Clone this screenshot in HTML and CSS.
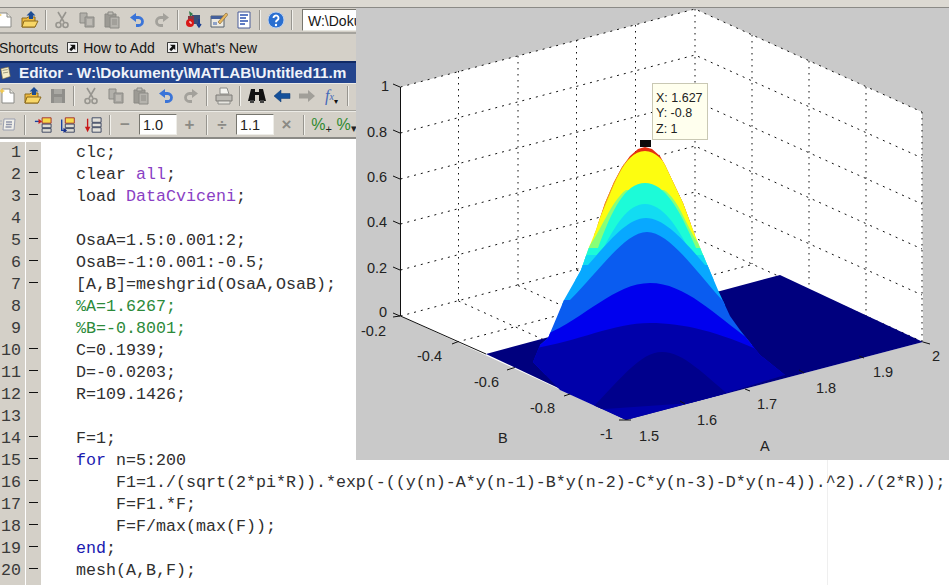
FILE: index.html
```html
<!DOCTYPE html>
<html lang="en">
<head>
<meta charset="utf-8">
<title>MATLAB Editor and Figure</title>
<link rel="stylesheet" href="styles.css">
</head>
<body>
<svg class="defs" width="0" height="0" aria-hidden="true">
  <defs>
    <symbol id="i-new" viewBox="0 0 18 18"><path d="M3 2h8l4 4v10H3z" fill="#fff" stroke="#8a8a86"/><path d="M11 2v4h4" fill="#ecebe4" stroke="#8a8a86"/><path d="M3 1l1 2 2 1-2 1-1 2-1-2-2-1 2-1z" fill="#f0c850"/></symbol>
    <symbol id="i-open" viewBox="0 0 18 18"><path d="M1 7h5l1-1h7v10H1z" fill="#eeb93e" stroke="#8c6a1c"/><path d="M1 16l2-6h14l-3 6z" fill="#f8d768" stroke="#8c6a1c"/><path d="M8 8V4.500H5.500L10 0l4.500 4.500H12V8z" fill="#1c4c94"/></symbol>
    <symbol id="i-save" viewBox="0 0 18 18"><path d="M2 2h14v14H2z" fill="#8f8e8a"/><path d="M5 2h8v5H5z" fill="#a9a8a3"/><path d="M5 10h8v6H5z" fill="#a2a19c"/></symbol>
    <symbol id="i-cut" viewBox="0 0 18 18"><g fill="none" stroke="#97958f" stroke-width="1.600"><path d="M5 1l6 10M13 1L7 11"/><circle cx="5.500" cy="14" r="2.500"/><circle cx="12.500" cy="14" r="2.500"/></g></symbol>
    <symbol id="i-copy" viewBox="0 0 18 18"><path d="M2 2h7v10H2z" fill="#b2b0aa" stroke="#8b8a85"/><path d="M7 6h9v10H7z" fill="#a7a5a0" stroke="#8b8a85"/><path d="M9 9h5M9 11h5M9 13h5" stroke="#d4d0c8"/></symbol>
    <symbol id="i-paste" viewBox="0 0 18 18"><path d="M2 3h11v13H2z" fill="#9c9a94" stroke="#8b8a85"/><path d="M5 1h5v3H5z" fill="#c1bfb8" stroke="#8b8a85"/><path d="M7 6h9v11H7z" fill="#b5b3ad" stroke="#8b8a85"/><path d="M9 9h5M9 11h5M9 13h5" stroke="#8f8d88"/></symbol>
    <symbol id="i-undo" viewBox="0 0 18 18"><path d="M2 6.500L8 2v9z" fill="#3a74d8"/><path d="M7 6.500h3.500a4 4 0 0 1 0 8H8" fill="none" stroke="#3a74d8" stroke-width="2.800"/></symbol>
    <symbol id="i-redo" viewBox="0 0 18 18"><path d="M16 6.500L10 2v9z" fill="#a3a19b"/><path d="M11 6.500H7.500a4 4 0 0 0 0 8H10" fill="none" stroke="#a3a19b" stroke-width="2.800"/></symbol>
    <symbol id="i-sim" viewBox="0 0 18 18"><path d="M4 0l4 3-3 3z" fill="#2f7a4a"/><path d="M7 4h8v9H7z" fill="#394e78"/><path d="M3 5h6v5H3z" fill="#8a3440"/><circle cx="5" cy="12" r="4" fill="#d81818"/><path d="M5 10v2h2" stroke="#fff" fill="none"/><path d="M14 8v7M12 13l2 3 2-3" stroke="#1c3f90" fill="none" stroke-width="1.500"/></symbol>
    <symbol id="i-guide" viewBox="0 0 18 18"><path d="M1 5h13v11H1z" fill="#eceae2" stroke="#55606f"/><path d="M1 5h13v3H1z" fill="#44609c"/><path d="M3 11h4v3H3z" fill="#8ea2c8"/><path d="M8 11l8-9 2 1.500L10 13z" fill="#e8b860" stroke="#7a6030" stroke-width=".6"/></symbol>
    <symbol id="i-prof" viewBox="0 0 18 18"><path d="M3 1h12v16H3z" fill="#fff" stroke="#4a5c98"/><path d="M5 4h8M5 7h6M5 10h8M5 13h5" stroke="#2c52b0" stroke-width="1.400"/></symbol>
    <symbol id="i-help" viewBox="0 0 18 18"><circle cx="9" cy="9" r="8" fill="#2a6fd0" stroke="#bcd0ee"/><path d="M6.500 7a2.500 2.500 0 1 1 3.800 2.100c-1 .6-1.300 1-1.300 2.100" fill="none" stroke="#fff" stroke-width="1.900"/><circle cx="9" cy="14" r="1.200" fill="#fff"/></symbol>
    <symbol id="i-print" viewBox="0 0 18 18"><path d="M5 1h7l2 6H5z" fill="#f4f4f0" stroke="#8c8c88"/><path d="M1 8h16v6H1z" fill="#bdbbb5" stroke="#7c7b76"/><path d="M3 14h12v3H3z" fill="#e6e5df" stroke="#8c8c88"/></symbol>
    <symbol id="i-find" viewBox="0 0 18 18"><path d="M3 2h4v3h4V2h4l3 12h-7V8H7v6H0z" fill="#111"/><path d="M2 13h4v3H2zM12 13h4v3h-4z" fill="#444"/></symbol>
    <symbol id="i-back" viewBox="0 0 18 18"><path d="M1 9l7-6v3.500h9v5H8V15z" fill="#14509a" stroke="#0c3870" stroke-width=".5"/></symbol>
    <symbol id="i-fwd" viewBox="0 0 18 18"><path d="M17 9l-7-6v3.500H1v5h9V15z" fill="#a19f99"/></symbol>
    <symbol id="i-cell1" viewBox="0 0 20 18"><path d="M9 1h10v6H9z" fill="#f6d84a" stroke="#a02828"/><path d="M9 8h10v4H9zM9 13h10v4H9z" fill="#dedcd4" stroke="#34405c"/><path d="M1 5h5" stroke="#1840a0" stroke-width="1.500"/><path d="M9 5L5 2v6z" fill="#c81818"/></symbol>
    <symbol id="i-cell2" viewBox="0 0 20 18"><path d="M7 1h10v6H7z" fill="#f6d84a" stroke="#a02828"/><path d="M7 8h10v4H7zM7 13h10v4H7z" fill="#dedcd4" stroke="#34405c"/><path d="M3 3v12h3" fill="none" stroke="#1840a0" stroke-width="1.500"/><path d="M9 15l-4-3v6z" fill="#18308c"/></symbol>
    <symbol id="i-cell3" viewBox="0 0 20 18"><path d="M9 1h10v5H9zM9 7h10v4H9zM9 12h10v5H9z" fill="#e3e1da" stroke="#34405c"/><path d="M4 2v10" stroke="#c81818" stroke-width="1.500"/><path d="M1 11h6l-3 6z" fill="#c81818"/></symbol>
    <symbol id="i-list" viewBox="0 0 18 18"><path d="M5 3h11l-1 11H4z" fill="#f0efe9" stroke="#9a9fb0"/><path d="M7 6h6M7 8.500h6M6.500 11h6" stroke="#8e95aa" stroke-width="1.300"/><path d="M0 5h3M0 8h3" stroke="#a8adba"/></symbol>
    <symbol id="i-short" viewBox="0 0 12 12"><path d="M.5.500h11v11H.500z" fill="#f4f4f4" stroke="#222"/><path d="M3 3h6v6L7.500 7 4.500 10 2.500 8l3-3z" fill="#111"/></symbol>
    <symbol id="i-doc" viewBox="0 0 14 16"><path d="M1 3l9-2 2 11-9 3z" fill="#f4edc8" stroke="#7c6a3c" stroke-width=".7"/><path d="M3 5l6-1M3.500 8l6-1" stroke="#8d8a70"/></symbol>
  </defs>
</svg>

<main class="desktop">
  <div class="menu-strip"></div>

  <div class="toolbar toolbar-main">
    <span class="btn"><svg class="ico"><use href="#i-new"/></svg></span>
    <span class="btn"><svg class="ico"><use href="#i-open"/></svg></span>
    <span class="sep"></span>
    <span class="btn"><svg class="ico"><use href="#i-cut"/></svg></span>
    <span class="btn"><svg class="ico"><use href="#i-copy"/></svg></span>
    <span class="btn"><svg class="ico"><use href="#i-paste"/></svg></span>
    <span class="btn"><svg class="ico"><use href="#i-undo"/></svg></span>
    <span class="btn"><svg class="ico"><use href="#i-redo"/></svg></span>
    <span class="sep"></span>
    <span class="btn"><svg class="ico"><use href="#i-sim"/></svg></span>
    <span class="btn"><svg class="ico"><use href="#i-guide"/></svg></span>
    <span class="btn"><svg class="ico"><use href="#i-prof"/></svg></span>
    <span class="sep"></span>
    <span class="btn"><svg class="ico"><use href="#i-help"/></svg></span>
    <span class="sep"></span>
    <span class="path-box">W:\Dokumenty\MATLAB</span>
  </div>

  <div class="shortcuts">
    <span class="shortcut-label">Shortcuts</span>
    <svg class="short-ico"><use href="#i-short"/></svg>
    <span class="shortcut-link">How to Add</span>
    <svg class="short-ico"><use href="#i-short"/></svg>
    <span class="shortcut-link">What's New</span>
  </div>

  <div class="titlebar">
    <svg class="title-ico"><use href="#i-doc"/></svg>
    <span>Editor - W:\Dokumenty\MATLAB\Untitled11.m</span>
  </div>

  <div class="toolbar toolbar-editor">
    <span class="btn"><svg class="ico"><use href="#i-new"/></svg></span>
    <span class="btn"><svg class="ico"><use href="#i-open"/></svg></span>
    <span class="btn"><svg class="ico"><use href="#i-save"/></svg></span>
    <span class="sep"></span>
    <span class="btn"><svg class="ico"><use href="#i-cut"/></svg></span>
    <span class="btn"><svg class="ico"><use href="#i-copy"/></svg></span>
    <span class="btn"><svg class="ico"><use href="#i-paste"/></svg></span>
    <span class="btn"><svg class="ico"><use href="#i-undo"/></svg></span>
    <span class="btn"><svg class="ico"><use href="#i-redo"/></svg></span>
    <span class="sep"></span>
    <span class="btn"><svg class="ico"><use href="#i-print"/></svg></span>
    <span class="sep"></span>
    <span class="btn"><svg class="ico"><use href="#i-find"/></svg></span>
    <span class="btn"><svg class="ico"><use href="#i-back"/></svg></span>
    <span class="btn"><svg class="ico"><use href="#i-fwd"/></svg></span>
    <span class="btn fx">f<sub class="fx-sub">x</sub><i class="fx-arrow">▾</i></span>
    <span class="sep"></span>
  </div>

  <div class="toolbar toolbar-cells">
    <span class="btn"><svg class="ico"><use href="#i-list"/></svg></span>
    <span class="sep wide"></span>
    <span class="btn"><svg class="ico"><use href="#i-cell1"/></svg></span>
    <span class="btn"><svg class="ico"><use href="#i-cell2"/></svg></span>
    <span class="btn"><svg class="ico"><use href="#i-cell3"/></svg></span>
    <span class="sep wide"></span>
    <span class="btn small op">−</span>
    <span class="num">1.0</span>
    <span class="btn op">+</span>
    <span class="sep wide"></span>
    <span class="btn small op">÷</span>
    <span class="num">1.1</span>
    <span class="btn op">×</span>
    <span class="sep wide"></span>
    <span class="btn pct">%<i class="pct-sign">+</i></span>
    <span class="btn pct">%<i class="pct-sign">▾</i></span>
  </div>

  <section class="code">
    <div class="line"><span class="no">1</span><span class="mark on"></span><span class="src">clc;</span></div>
    <div class="line"><span class="no">2</span><span class="mark on"></span><span class="src">clear <span class="str">all</span>;</span></div>
    <div class="line"><span class="no">3</span><span class="mark on"></span><span class="src">load <span class="str">DataCviceni</span>;</span></div>
    <div class="line"><span class="no">4</span><span class="mark"></span><span class="src"></span></div>
    <div class="line"><span class="no">5</span><span class="mark on"></span><span class="src">OsaA=1.5:0.001:2;</span></div>
    <div class="line"><span class="no">6</span><span class="mark on"></span><span class="src">OsaB=-1:0.001:-0.5;</span></div>
    <div class="line"><span class="no">7</span><span class="mark on"></span><span class="src">[A,B]=meshgrid(OsaA,OsaB);</span></div>
    <div class="line"><span class="no">8</span><span class="mark"></span><span class="src cmt">%A=1.6267;</span></div>
    <div class="line"><span class="no">9</span><span class="mark"></span><span class="src cmt">%B=-0.8001;</span></div>
    <div class="line"><span class="no">10</span><span class="mark on"></span><span class="src">C=0.1939;</span></div>
    <div class="line"><span class="no">11</span><span class="mark on"></span><span class="src">D=-0.0203;</span></div>
    <div class="line"><span class="no">12</span><span class="mark on"></span><span class="src">R=109.1426;</span></div>
    <div class="line"><span class="no">13</span><span class="mark"></span><span class="src"></span></div>
    <div class="line"><span class="no">14</span><span class="mark on"></span><span class="src">F=1;</span></div>
    <div class="line"><span class="no">15</span><span class="mark on"></span><span class="src"><span class="kw">for</span> n=5:200</span></div>
    <div class="line"><span class="no">16</span><span class="mark on"></span><span class="src">    F1=1./(sqrt(2*pi*R)).*exp(-((y(n)-A*y(n-1)-B*y(n-2)-C*y(n-3)-D*y(n-4)).^2)./(2*R));</span></div>
    <div class="line"><span class="no">17</span><span class="mark on"></span><span class="src">    F=F1.*F;</span></div>
    <div class="line"><span class="no">18</span><span class="mark on"></span><span class="src">    F=F/max(max(F));</span></div>
    <div class="line"><span class="no">19</span><span class="mark on"></span><span class="src"><span class="kw">end</span>;</span></div>
    <div class="line"><span class="no">20</span><span class="mark on"></span><span class="src">mesh(A,B,F);</span></div>
    <div class="line"><span class="no"></span><span class="mark"></span><span class="src"></span></div>
  </section>

  <figure class="figure">
    <svg class="plot" viewBox="356 8 593 452" width="593" height="452">
      <defs>
        <clipPath id="hill"><path d="M533 362L540 345 548 338 564 300 581 270 588 250 596 230 605 203 614 182 622 167 630 156 638 149 645 147 652 149 660 156 665 165 674 184 683 203 693 230 701 250 718 290 730 316 740 330 760 355 785 375 720 395 626 420 560 390z"/></clipPath>
      </defs>
      <path class="wall" d="M400.500 87L695 9 922 112 923 342 626 420 400.500 316z"/>
      <path class="grid-v" d="M458.500 71V301M518 56V285M576.500 40V269M635.500 25V254M695 9V238M752 35V264M809 61V290M866 87V316M922 112V342"/>
      <path class="grid" d="M400.500 87L695 9 922 112M400.500 133L695 55 922 158M400.500 179L695 101 922 204M400.500 224L695 146 922 249M400.500 270L695 192 922 295M400.500 316L695 238 923 342"/>
      <path class="grid" d="M458.500 301L685 404M518 285.500L745 389M576.500 270L804 373M635.500 254L864 358M457 342L754 264M513 368L810 290M570 394L866 316"/>
      <path class="floor" d="M486 354L626 420 923 342 780 275z"/>
      <g clip-path="url(#hill)">
        <path class="b-red" d="M520 225V130H780V225z"/>
        <path class="b-orange" d="M599 215C611 190 620 153 645 153 667 153 679 185 693 222L800 222V235H500V215z"/>
        <path class="b-yellow" d="M601 215C613 190 623 151 645 151 666 151 678 188 695 222L800 222V250H500V215z"/>
        <path class="b-green" d="M590 245C600 232 612 200 626 190H664C680 200 688 232 700 245H800V260H500V245z"/>
        <path class="b-cyan" d="M598 248C612 210 625 183 645 183 665 183 680 210 696 248H800V270H500V248z"/>
        <path class="b-teal" d="M600 255C615 225 628 204 645 204 662 204 677 225 692 255H800V280H500V255z"/>
        <path class="b-sky" d="M588 265C610 240 628 218 646 218 664 218 684 240 705 265H800V305H500V265z"/>
        <path class="b-azure" d="M570 300C600 270 625 232 647 232 669 232 695 270 722 300H800V345H500V300z"/>
        <path class="b-blue" d="M545 335C585 318 615 283 650 283 685 283 715 315 750 340H800V375H500V335z"/>
        <path class="b-dark" d="M520 350C572 345 610 323 650 323 690 323 730 335 790 365V425H520z"/>
        <path class="b-navy" d="M590 410C620 380 640 352 662 352 684 352 704 375 735 400z"/>
      </g>
      <path class="axis" d="M400.500 87V316L486 354M400 87l-7-3M400 133l-7-3M400 179l-7-3M400 224l-7-3M400 270l-7-3M400 316l-7-3M400 316l-7 1M457 342l-5 2M513 368l-6 2M570 394l-6 2M619 420h12M685 404l-5-3M745 389l5 2M804 373l-5-3M864 358l-5-2M923 342l7 2"/>
      <g class="ticks">
        <text x="381" y="91">1</text>
        <text x="367" y="136.500">0.8</text>
        <text x="367" y="181.500">0.6</text>
        <text x="367" y="226.500">0.4</text>
        <text x="367" y="272.500">0.2</text>
        <text x="379" y="317">0</text>
        <text x="361" y="336">-0.2</text>
        <text x="417" y="361">-0.4</text>
        <text x="474" y="387">-0.6</text>
        <text x="530" y="413">-0.8</text>
        <text x="498" y="443">B</text>
        <text x="600" y="439">-1</text>
        <text x="639" y="441">1.5</text>
        <text x="697" y="425">1.6</text>
        <text x="757" y="409">1.7</text>
        <text x="816" y="393">1.8</text>
        <text x="873" y="377">1.9</text>
        <text x="932" y="361">2</text>
        <text x="760" y="451">A</text>
      </g>
      <rect class="marker" x="640" y="140" width="11" height="7"/>
      <rect class="tip" x="652.500" y="83.500" width="55" height="56"/>
      <g class="tip-text">
        <text x="656" y="101.500">X: 1.627</text>
        <text x="656" y="116.500">Y: -0.8</text>
        <text x="656" y="133">Z: 1</text>
      </g>
    </svg>
  </figure>
</main>
</body>
</html>
```
FILE: styles.css
```css
* { box-sizing: border-box; }

html, body {
  margin: 0;
  padding: 0;
  height: 100%;
  overflow: hidden;
  background: #fff;
}

.defs { position: absolute; }

.desktop {
  position: relative;
  width: 949px;
  height: 585px;
  overflow: hidden;
  display: flex;
  flex-direction: column;
  font-family: "Liberation Sans", Arial, sans-serif;
  color: #161616;
  background: #d4d0c8;
}

.menu-strip {
  height: 8px;
  flex: none;
  background: #dcd9d2;
  border-bottom: 1px solid #8b8a86;
}

.toolbar {
  display: flex;
  align-items: center;
  flex: none;
  background: #d4d0c8;
}

.toolbar-main {
  height: 26px;
  margin-left: -8px;
  border-bottom: 2px solid #a6a49e;
}

.toolbar-main .sep { margin: 0 2.500px; }

.toolbar-editor {
  height: 28px;
  margin-left: -5px;
  padding-bottom: 2px;
  border-top: 1px solid #ecebe6;
  border-bottom: 1px solid #a6a49e;
}

.toolbar-editor .sep { margin: 0 3px; }

.toolbar-cells {
  height: 28px;
  margin-left: -5px;
  border-top: 1px solid #ecebe6;
  border-bottom: 2px solid #8b8a86;
}

.btn {
  flex: none;
  width: 25px;
  height: 20px;
  display: flex;
  align-items: center;
  justify-content: center;
}

.btn.small { width: 20px; }

.ico { width: 18px; height: 18px; }

.sep {
  flex: none;
  width: 2px;
  height: 20px;
  margin: 0 2px;
  border-left: 1px solid #97958f;
  border-right: 1px solid #f2f1ec;
}

.toolbar-cells .sep.wide { margin: 0 4px; }

.path-box {
  flex: none;
  width: 200px;
  height: 22px;
  margin-left: 7px;
  padding: 3px 0 0 5px;
  font-size: 14px;
  white-space: nowrap;
  overflow: hidden;
  background: #fff;
  border: 1px solid;
  border-color: #77766f #e8e7e1 #e8e7e1 #77766f;
}

.shortcuts {
  flex: none;
  height: 27px;
  display: flex;
  align-items: center;
  margin-left: -1px;
  font-size: 14px;
  background: #d4d0c8;
}

.shortcut-label { margin-right: 9px; }

.short-ico { width: 11px; height: 11px; flex: none; }

.shortcut-link { margin: 0 12px 0 5px; }

.titlebar {
  flex: none;
  height: 22px;
  display: flex;
  align-items: center;
  gap: 7px;
  font-size: 15.300px;
  font-weight: 700;
  color: #f0f3fa;
  white-space: nowrap;
  background: #24458e;
  border-top: 2px solid #0f2a66;
}

.title-ico { width: 12px; height: 14px; flex: none; }

.op {
  font-size: 17px;
  font-weight: 700;
  color: #8b8a85;
}

.num {
  flex: none;
  width: 38px;
  height: 21px;
  margin-left: 4px;
  padding: 2px 0 0 3px;
  font-size: 14.500px;
  color: #222;
  background: #fff;
  border: 1px solid;
  border-color: #77766f #eeede8 #eeede8 #77766f;
}

.fx {
  font-family: "Liberation Serif", serif;
  font-style: italic;
  font-size: 16px;
  color: #4468b8;
}

.fx-sub { font-size: 10px; }

.fx-arrow {
  font-family: "DejaVu Sans", sans-serif;
  font-style: normal;
  font-size: 8px;
  color: #111;
  align-self: flex-end;
}

.pct {
  font-size: 16px;
  color: #2f8a2f;
}

.pct-sign {
  font-size: 11px;
  font-style: normal;
  color: #222;
  align-self: flex-end;
}

.code {
  flex: 1;
  padding-top: 3px;
  overflow: hidden;
  font-family: "Liberation Mono", "Courier New", monospace;
  font-size: 16.660px;
  color: #303030;
  background: #fff linear-gradient(#efefef, #efefef) 827px 0 / 1px 100% no-repeat;
}

.line {
  display: flex;
  height: 22px;
  line-height: 22px;
}

.no {
  flex: none;
  width: 25px;
  padding-right: 4px;
  text-align: right;
  color: #3a3a3a;
  background: #d4d0c8;
}

.mark {
  flex: none;
  width: 15px;
  margin-left: 1px;
  background: #d4d0c8;
}

.mark.on {
  background: #d4d0c8 linear-gradient(#111, #111) 3px 8px / 9px 1px no-repeat;
}

.src {
  padding-left: 35px;
  white-space: pre;
}

.str { color: #8a3fc4; }
.cmt { color: #2c8a3a; }
.kw { color: #1a1ab0; }

.figure {
  position: absolute;
  top: 8px;
  left: 356px;
  width: 593px;
  height: 452px;
  margin: 0;
  background: #c9c9c9;
}

.plot { display: block; }

.wall { fill: #fff; }

.grid {
  fill: none;
  stroke: #111;
  stroke-width: 1;
  stroke-dasharray: 2 5;
}

.grid-v {
  fill: none;
  stroke: #111;
  stroke-width: 1;
  stroke-dasharray: 1.500 4.500;
}

.floor { fill: #00007e; }

.axis { fill: none; stroke: #111; stroke-width: 1; }

.ticks text {
  font-family: "Liberation Sans", Arial, sans-serif;
  font-size: 14.500px;
  fill: #222;
}

.marker { fill: #0a0a0a; }

.tip { fill: #ffffee; stroke: #c9c8b4; }

.tip-text text {
  font-family: "Liberation Sans", Arial, sans-serif;
  font-size: 12.500px;
  fill: #222;
}

.b-red { fill: #e43012; }
.b-orange { fill: #f0a020; }
.b-yellow { fill: #fdfd10; }
.b-green { fill: #88ff78; }
.b-cyan { fill: #1cfbd8; }
.b-teal { fill: #12dcf2; }
.b-sky { fill: #08a8ff; }
.b-azure { fill: #0a5cf0; }
.b-blue { fill: #0000ee; }
.b-dark { fill: #0000aa; }
.b-navy { fill: #00008c; }
```
